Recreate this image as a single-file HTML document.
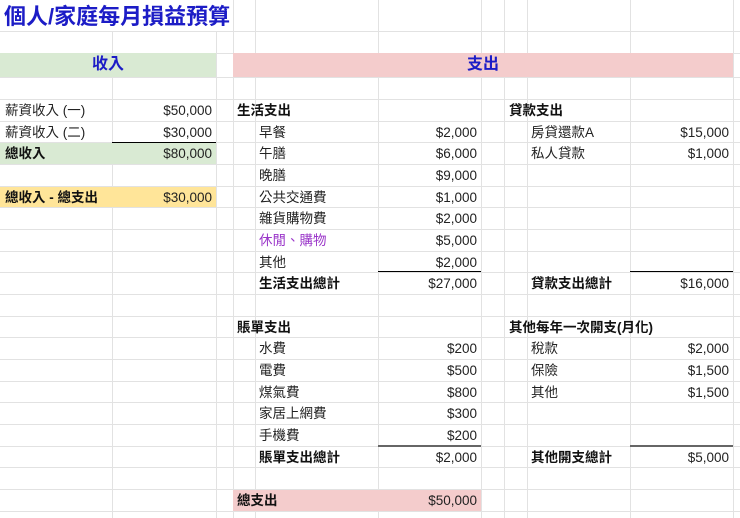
<!DOCTYPE html>
<html><head><meta charset="utf-8"><style>
body{margin:0;width:740px;height:518px;overflow:hidden;background:#fff;position:relative;font-family:"Liberation Sans","Noto Sans CJK TC",sans-serif;font-size:13.5px;color:#222}
.h{position:absolute;left:0;width:740px;height:1px;background:#e2e2e2}
.v{position:absolute;top:0;height:518px;width:1px;background:#e2e2e2}
.f{position:absolute}
.c{position:absolute;height:21px;line-height:23px;white-space:nowrap}
.r{text-align:right}
.b{font-weight:bold;color:#111}
.t{position:absolute;left:0;top:0;height:31px;width:232px;background:#fff;color:#1c1cc6;font-size:22px;font-weight:bold;line-height:33px;padding-left:4px;box-sizing:border-box;white-space:nowrap}
.bl{position:absolute;height:1px;background:#000}
</style></head><body>
<div class="v" style="left:112px"></div><div class="v" style="left:216px"></div><div class="v" style="left:233px"></div><div class="v" style="left:255px"></div><div class="v" style="left:378px"></div><div class="v" style="left:481px"></div><div class="v" style="left:504px"></div><div class="v" style="left:527px"></div><div class="v" style="left:630px"></div><div class="v" style="left:733px"></div>
<div class="h" style="top:31px"></div><div class="h" style="top:53px"></div><div class="h" style="top:77px"></div><div class="h" style="top:99px"></div>
<div class="h" style="top:121px"></div><div class="h" style="top:142px"></div><div class="h" style="top:164px"></div><div class="h" style="top:186px"></div><div class="h" style="top:207px"></div><div class="h" style="top:229px"></div><div class="h" style="top:251px"></div><div class="h" style="top:272px"></div><div class="h" style="top:294px"></div><div class="h" style="top:316px"></div><div class="h" style="top:337px"></div><div class="h" style="top:359px"></div><div class="h" style="top:381px"></div><div class="h" style="top:402px"></div><div class="h" style="top:424px"></div><div class="h" style="top:446px"></div><div class="h" style="top:467px"></div><div class="h" style="top:489px"></div><div class="h" style="top:511px"></div>
<div class="t">個人/家庭每月損益預算</div>
<div class="f" style="left:0;top:53px;width:216px;height:24px;background:#d9ead3;color:#1c1cc6;font-weight:bold;font-size:16px;text-align:center;line-height:24px">收入</div>
<div class="f" style="left:233px;top:53px;width:500px;height:24px;background:#f4cccc;color:#1c1cc6;font-weight:bold;font-size:16px;text-align:center;line-height:24px">支出</div>
<div class="f" style="left:0;top:143px;width:216px;height:21px;background:#d9ead3"></div>
<div class="f" style="left:0;top:187px;width:216px;height:20px;background:#ffe599"></div>
<div class="f" style="left:233px;top:490px;width:248px;height:21px;background:#f4cccc"></div>
<div class="bl" style="left:112px;top:142px;width:104px"></div>
<div class="bl" style="left:378px;top:271px;width:103px"></div>
<div class="bl" style="left:630px;top:271px;width:103px"></div>
<div class="bl" style="left:378px;top:445px;width:103px;height:2px;background:#666"></div>
<div class="bl" style="left:630px;top:445px;width:103px;height:2px;background:#666"></div>

<div class="c" style="left:5px;top:99px">薪資收入 (一)</div><div class="c r" style="left:112px;width:100px;top:99px">$50,000</div>
<div class="c" style="left:5px;top:121px">薪資收入 (二)</div><div class="c r" style="left:112px;width:100px;top:121px">$30,000</div>
<div class="c b" style="left:5px;top:142px">總收入</div><div class="c r" style="left:112px;width:100px;top:142px">$80,000</div>
<div class="c b" style="left:5px;top:186px">總收入 - 總支出</div><div class="c r" style="left:112px;width:100px;top:186px">$30,000</div>

<div class="c b" style="left:237px;top:99px">生活支出</div>
<div class="c" style="left:259px;top:121px">早餐</div><div class="c r" style="left:378px;width:99px;top:121px">$2,000</div>
<div class="c" style="left:259px;top:142px">午膳</div><div class="c r" style="left:378px;width:99px;top:142px">$6,000</div>
<div class="c" style="left:259px;top:164px">晚膳</div><div class="c r" style="left:378px;width:99px;top:164px">$9,000</div>
<div class="c" style="left:259px;top:186px">公共交通費</div><div class="c r" style="left:378px;width:99px;top:186px">$1,000</div>
<div class="c" style="left:259px;top:207px">雜貨購物費</div><div class="c r" style="left:378px;width:99px;top:207px">$2,000</div>
<div class="c" style="left:259px;top:229px;color:#9a35c9">休閒、購物</div><div class="c r" style="left:378px;width:99px;top:229px">$5,000</div>
<div class="c" style="left:259px;top:251px">其他</div><div class="c r" style="left:378px;width:99px;top:251px">$2,000</div>
<div class="c b" style="left:259px;top:272px">生活支出總計</div><div class="c r" style="left:378px;width:99px;top:272px">$27,000</div>

<div class="c b" style="left:509px;top:99px">貸款支出</div>
<div class="c" style="left:531px;top:121px">房貸還款A</div><div class="c r" style="left:630px;width:99px;top:121px">$15,000</div>
<div class="c" style="left:531px;top:142px">私人貸款</div><div class="c r" style="left:630px;width:99px;top:142px">$1,000</div>
<div class="c b" style="left:531px;top:272px">貸款支出總計</div><div class="c r" style="left:630px;width:99px;top:272px">$16,000</div>

<div class="c b" style="left:237px;top:316px">賬單支出</div>
<div class="c" style="left:259px;top:337px">水費</div><div class="c r" style="left:378px;width:99px;top:337px">$200</div>
<div class="c" style="left:259px;top:359px">電費</div><div class="c r" style="left:378px;width:99px;top:359px">$500</div>
<div class="c" style="left:259px;top:381px">煤氣費</div><div class="c r" style="left:378px;width:99px;top:381px">$800</div>
<div class="c" style="left:259px;top:402px">家居上網費</div><div class="c r" style="left:378px;width:99px;top:402px">$300</div>
<div class="c" style="left:259px;top:424px">手機費</div><div class="c r" style="left:378px;width:99px;top:424px">$200</div>
<div class="c b" style="left:259px;top:446px">賬單支出總計</div><div class="c r" style="left:378px;width:99px;top:446px">$2,000</div>

<div class="c b" style="left:509px;top:316px">其他每年一次開支(月化)</div>
<div class="c" style="left:531px;top:337px">稅款</div><div class="c r" style="left:630px;width:99px;top:337px">$2,000</div>
<div class="c" style="left:531px;top:359px">保險</div><div class="c r" style="left:630px;width:99px;top:359px">$1,500</div>
<div class="c" style="left:531px;top:381px">其他</div><div class="c r" style="left:630px;width:99px;top:381px">$1,500</div>
<div class="c b" style="left:531px;top:446px">其他開支總計</div><div class="c r" style="left:630px;width:99px;top:446px">$5,000</div>

<div class="c b" style="left:237px;top:489px">總支出</div><div class="c r" style="left:378px;width:99px;top:489px">$50,000</div>
</body></html>
